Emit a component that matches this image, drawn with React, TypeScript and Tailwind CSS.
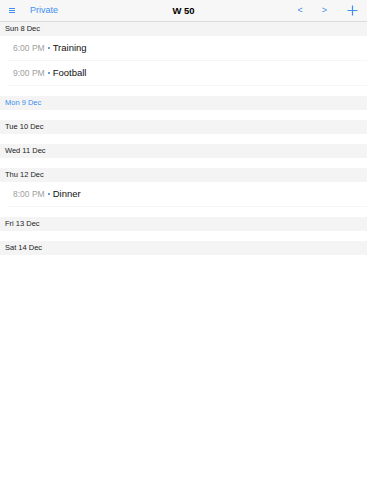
import React from "react";

const font = { fontFamily: '"Liberation Sans", Arial, sans-serif' };

type Ev = { time: string; title: string };
type Day = { label: string; today?: boolean; events: Ev[] };

const days: Day[] = [
  { label: "Sun 8 Dec", events: [{ time: "6:00 PM", title: "Training" }, { time: "9:00 PM", title: "Football" }] },
  { label: "Mon 9 Dec", today: true, events: [] },
  { label: "Tue 10 Dec", events: [] },
  { label: "Wed 11 Dec", events: [] },
  { label: "Thu 12 Dec", events: [{ time: "8:00 PM", title: "Dinner" }] },
  { label: "Fri 13 Dec", events: [] },
  { label: "Sat 14 Dec", events: [] },
];

export default function App() {
  return (
    <div className="w-[367px] h-[480px] bg-white overflow-hidden" style={font}>
      <div className="h-[22px] bg-[#f7f7f7] border-b border-[#dcdcdc] flex items-center relative">
        <div className="ml-[9px] flex flex-col gap-[1px] w-[6px]">
          <div className="h-[1px] bg-[#3d8ff0]" />
          <div className="h-[1px] bg-[#3d8ff0]" />
          <div className="h-[1px] bg-[#3d8ff0]" />
        </div>
        <span className="ml-[15px] text-[9px] text-[#3d8ff0] leading-none">Private</span>
        <span className="absolute left-0 right-0 text-center text-[9.5px] font-bold text-black leading-none pointer-events-none">W 50</span>
        <div className="ml-auto flex items-center">
          <span className="text-[9px] text-[#3d8ff0] leading-none">&lt;</span>
          <span className="ml-[19px] text-[9px] text-[#3d8ff0] leading-none">&gt;</span>
          <svg className="ml-[20px] mr-[9px]" width="11" height="11" viewBox="0 0 11 11">
            <path d="M5.5 0.5 V10.5 M0.5 5.5 H10.5" stroke="#3d8ff0" strokeWidth="1.2" />
          </svg>
        </div>
      </div>
      {days.map((d) => (
        <div key={d.label} className="pb-[10px]">
          <div className="h-[14px] bg-[#f4f4f4] flex items-center pl-[5px]">
            <span className={`text-[7.5px] leading-none ${d.today ? "text-[#3d8ff0]" : "text-[#222]"}`}>{d.label}</span>
          </div>
          {d.events.map((e) => (
            <div key={e.time} className="h-[25px] ml-[8px] border-b border-[#f5f5f5] flex items-center pl-[5px]">
              <span className="text-[8.5px] text-[#a0a0a0] leading-none">{e.time}</span>
              <span className="mx-[3px] w-[2px] h-[2px] bg-[#6c9bd6]" />
              <span className="text-[9.5px] text-[#111] leading-none">{e.title}</span>
            </div>
          ))}
        </div>
      ))}
    </div>
  );
}
